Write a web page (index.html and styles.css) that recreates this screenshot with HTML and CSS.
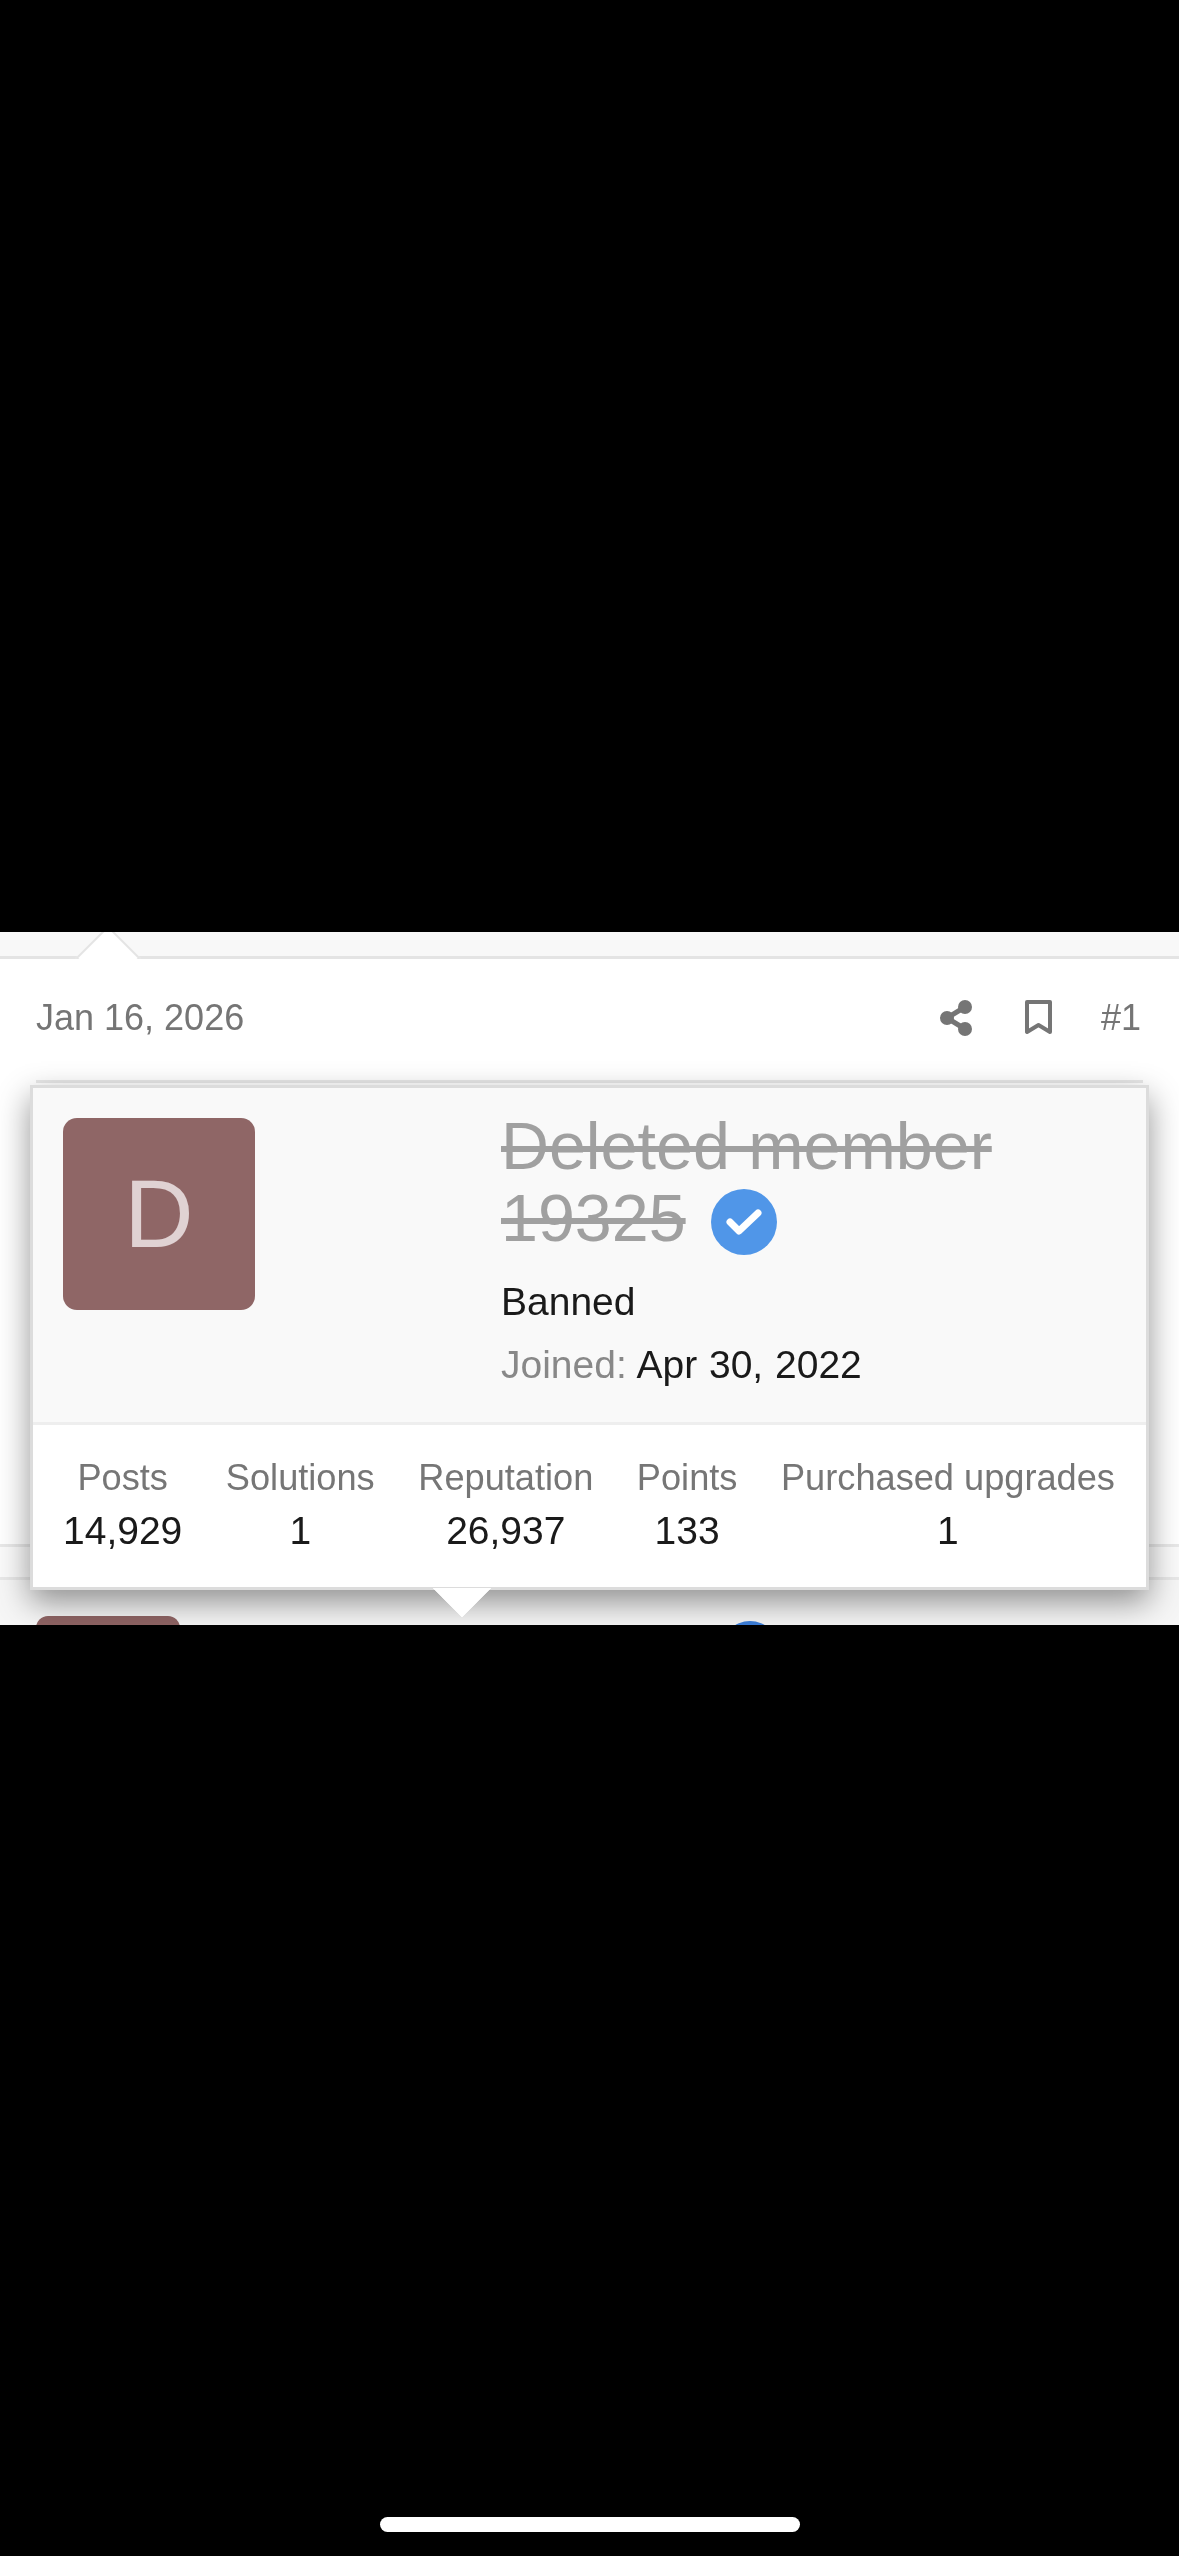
FILE: index.html
```html
<!DOCTYPE html>
<html lang="en">
  <head>
    <meta charset="UTF-8" />
    <meta name="viewport" content="width=device-width, initial-scale=1.0" />
    <title>Deleted member 19325</title>
    <link rel="stylesheet" href="styles.css">
  </head>
  <body>
    <div class="shot">
      <!-- thread page behind the tooltip -->
      <div class="strip"><span class="notch"></span></div>

      <div class="post-head">
        <span class="date">Jan 16, 2026</span>
        <div class="actions">
          <svg class="icon-share" viewBox="0 0 32 36" aria-label="share">
            <path d="M25 7 L7 18 L25 29" />
            <circle cx="7" cy="18" r="7" />
            <circle cx="25" cy="7" r="7" />
            <circle cx="25" cy="29" r="7" />
          </svg>
          <svg class="icon-bookmark" viewBox="0 0 27 36" aria-label="bookmark">
            <path d="M2 2 H25 V32 L13.5 25 L2 32 Z" />
          </svg>
          <span class="post-num">#1</span>
        </div>
      </div>
      <div class="divider"></div>
      <div class="post-body"></div>
      <div class="post-foot"></div>

      <div class="next-post">
        <div class="next-avatar"></div>
        <div class="next-badge"></div>
      </div>

      <!-- member tooltip -->
      <div class="tooltip">
        <div class="tip-head">
          <div class="avatar">D</div>
          <div class="member">
            <div class="name"><s>Deleted member 19325</s> <svg class="badge" viewBox="0 0 66 66" aria-label="verified">
                <circle cx="33" cy="33" r="33" />
                <path d="M19 33 L28 42 L47 24" />
              </svg></div>
            <div class="line">Banned</div>
            <div class="line"><span class="muted">Joined:</span> Apr 30, 2022</div>
          </div>
        </div>
        <div class="stats">
          <div class="stat"><div class="stat-label">Posts</div><div class="stat-value">14,929</div></div>
          <div class="stat"><div class="stat-label">Solutions</div><div class="stat-value">1</div></div>
          <div class="stat"><div class="stat-label">Reputation</div><div class="stat-value">26,937</div></div>
          <div class="stat"><div class="stat-label">Points</div><div class="stat-value">133</div></div>
          <div class="stat"><div class="stat-label">Purchased upgrades</div><div class="stat-value">1</div></div>
        </div>
        <span class="arrow"></span>
      </div>
    </div>

    <div class="home-bar"></div>
  </body>
</html>
```

FILE: styles.css
```css
html,
body {
  margin: 0;
  height: 2556px;
  overflow: hidden;
  background: #000;
  font-family: "Liberation Sans", Arial, sans-serif;
}

.shot {
  position: relative;
  height: 693px;
  margin-top: 932px;
  overflow: hidden;
  background: #fff;
  filter: blur(0.4px);
}

.strip {
  position: relative;
  height: 24px;
  background: #f8f8f8;
  border-bottom: 3px solid #e4e4e4;
}
.notch {
  position: absolute;
  left: 85px;
  top: 3px;
  width: 46px;
  height: 46px;
  background: #fff;
  border: 2px solid #e4e4e4;
  box-sizing: border-box;
  transform: rotate(45deg);
}

.post-head {
  position: relative;
  display: flex;
  align-items: center;
  justify-content: space-between;
  height: 118px;
  padding: 0 38px 3px 36px;
  background: #fff;
  color: #757575;
  font-size: 36px;
}
.actions {
  display: flex;
  align-items: center;
  gap: 49px;
}
.icon-share {
  width: 32px;
  height: 36px;
  margin-right: 4px;
  fill: #757575;
}
.icon-share path {
  fill: none;
  stroke: #757575;
  stroke-width: 5;
}
.icon-bookmark {
  width: 27px;
  height: 36px;
}
.icon-bookmark path {
  fill: none;
  stroke: #757575;
  stroke-width: 4;
  stroke-linejoin: round;
}

.divider {
  height: 3px;
  margin: 0 36px;
  background: #e8e8e8;
}
.post-body {
  height: 461px;
}
.post-foot {
  height: 30px;
  background: #fafafa;
  border-top: 3px solid #e8e8e8;
  border-bottom: 3px solid #e8e8e8;
}
.next-post {
  display: flex;
  height: 200px;
  padding: 36px 0 0 36px;
  background: #f6f6f6;
}
.next-avatar {
  width: 144px;
  height: 144px;
  border-radius: 12px;
  background: #8f6464;
}
.next-badge {
  width: 58px;
  height: 58px;
  margin: 5px 0 0 541px;
  border-radius: 50%;
  background: #3d7fd9;
}

.tooltip {
  position: absolute;
  left: 30px;
  top: 153px;
  width: 1113px;
  background: #fff;
  border: 3px solid #dcdcdc;
  box-shadow: 0 12px 30px rgba(0, 0, 0, 0.42);
}
.tip-head {
  display: flex;
  gap: 246px;
  padding: 22px 30px 26px;
  background: #f9f9f9;
  border-bottom: 3px solid #eee;
}
.avatar {
  flex: none;
  width: 192px;
  height: 192px;
  margin-top: 8px;
  border-radius: 14px;
  background: #8f6666;
  color: #e0d2d3;
  font-size: 96px;
  line-height: 192px;
  text-align: center;
}
.member {
  width: 560px;
}
.name {
  margin-bottom: 15px;
  color: #a0a0a0;
  font-size: 66.4px;
  line-height: 72px;
}
.badge {
  width: 66px;
  height: 66px;
  margin-left: 7px;
  vertical-align: -14px;
  fill: #5096e8;
}
.badge path {
  fill: none;
  stroke: #fff;
  stroke-width: 7;
  stroke-linecap: round;
  stroke-linejoin: round;
}
.line {
  color: #1a1a1a;
  font-size: 39px;
  line-height: 63px;
  word-spacing: 1px;
}
.muted {
  color: #888;
}

.stats {
  display: flex;
  justify-content: space-between;
  padding: 27px 31px 30px 30px;
}
.stat {
  text-align: center;
}
.stat-label {
  color: #767676;
  font-size: 36.2px;
  line-height: 52px;
}
.stat-value {
  color: #1a1a1a;
  font-size: 39px;
  line-height: 53px;
}
.arrow {
  position: absolute;
  left: 408px;
  bottom: -22px;
  width: 42px;
  height: 42px;
  background: #fff;
  transform: rotate(45deg);
  clip-path: polygon(100% 0, 100% 100%, 0 100%);
}

.home-bar {
  width: 420px;
  height: 15px;
  margin: 892px auto 0;
  border-radius: 8px;
  background: #fff;
}
```
